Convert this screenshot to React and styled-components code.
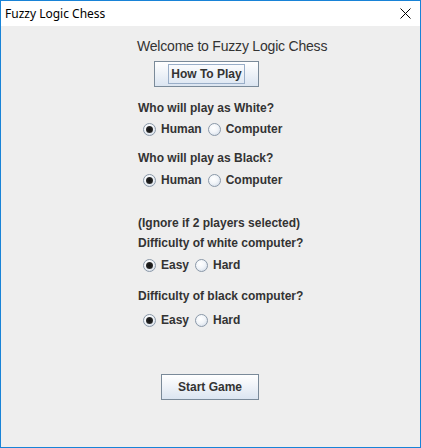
import React, { useState } from "react";
import styled, { createGlobalStyle } from "styled-components";

const GlobalStyle = createGlobalStyle`
  html, body {
    margin: 0;
    padding: 0;
    background: #ffffff;
  }
`;

const Window = styled.div`
  box-sizing: border-box;
  width: 421px;
  height: 448px;
  border: 1px solid #1883d7;
  display: flex;
  flex-direction: column;
  background: #eeeeee;
`;

const TitleBar = styled.div`
  height: 25px;
  flex: none;
  background: #ffffff;
  display: flex;
  align-items: center;
  justify-content: space-between;
  padding: 0 9px 0 4px;
  font-family: "Noto Sans", "Open Sans", sans-serif;
  font-size: 12px;
  color: #000000;
`;

const CloseIcon = () => (
  <svg width="11" height="11" viewBox="0 0 11 11">
    <path d="M0.5 0.5 L10.5 10.5 M10.5 0.5 L0.5 10.5" stroke="#000" strokeWidth="1" />
  </svg>
);

const Content = styled.div`
  flex: 1;
  display: flex;
  flex-direction: column;
  align-items: flex-start;
  padding: 12px 0 0 136px;
  font-family: "Liberation Sans", Arial, sans-serif;
  color: #333333;
`;

const Welcome = styled.div`
  font-size: 14px;
  line-height: 17px;
  letter-spacing: -0.2px;
`;

const Button = styled.button`
  box-sizing: border-box;
  height: 26px;
  width: ${(p) => p.$w}px;
  margin: ${(p) => p.$top}px 0 0 ${(p) => p.$left}px;
  border: 1px solid #7a8a99;
  border-radius: 0;
  background: linear-gradient(#ffffff 0%, #f3f6fa 35%, #dbe5f1 100%);
  font-family: "Liberation Sans", Arial, sans-serif;
  font-size: 12px;
  font-weight: bold;
  color: #333333;
  padding: 0;
  display: flex;
  align-items: center;
  justify-content: center;
`;

const Focus = styled.span`
  border: 1px solid #99aec8;
  padding: 2px 2px;
  line-height: 14px;
`;

const Label = styled.div`
  font-size: 12px;
  font-weight: bold;
  line-height: 15px;
  margin-top: ${(p) => p.$top}px;
  margin-left: 1px;
`;

const RadioRow = styled.div`
  display: flex;
  align-items: center;
  height: 20px;
  margin-top: ${(p) => p.$top}px;
  margin-left: 6px;
`;

const Option = styled.label`
  display: flex;
  align-items: center;
  gap: 5px;
  margin-right: 6px;
  font-size: 12px;
  font-weight: bold;
  cursor: default;
`;

const Dot = styled.span`
  position: relative;
  box-sizing: border-box;
  width: 13px;
  height: 13px;
  border-radius: 50%;
  border: 1px solid #8a98a8;
  background: radial-gradient(circle at 40% 35%, #ffffff 0%, #f2f5f9 45%, #cbd6e4 100%);

  &::after {
    content: "";
    display: ${(p) => (p.$on ? "block" : "none")};
    position: absolute;
    left: 2px;
    top: 2px;
    width: 7px;
    height: 7px;
    border-radius: 50%;
    background: radial-gradient(circle, #111111 0%, #222222 55%, #555555 100%);
  }
`;

function RadioGroup({ options, top }) {
  const [value, setValue] = useState(options[0]);
  return (
    <RadioRow $top={top}>
      {options.map((o) => (
        <Option key={o} onClick={() => setValue(o)}>
          <Dot $on={value === o} />
          {o}
        </Option>
      ))}
    </RadioRow>
  );
}

export default function App() {
  return (
    <>
      <GlobalStyle />
      <Window>
        <TitleBar>
          <span>Fuzzy Logic Chess</span>
          <CloseIcon />
        </TitleBar>
        <Content>
          <Welcome>Welcome to Fuzzy Logic Chess</Welcome>
          <Button $w={105} $top={6} $left={17}>
            <Focus>How To Play</Focus>
          </Button>
          <Label $top={14}>Who will play as White?</Label>
          <RadioGroup options={["Human", "Computer"]} top={3} />
          <Label $top={12}>Who will play as Black?</Label>
          <RadioGroup options={["Human", "Computer"]} top={4} />
          <Label $top={26}>(Ignore if 2 players selected)</Label>
          <Label $top={5}>Difficulty of white computer?</Label>
          <RadioGroup options={["Easy", "Hard"]} top={4} />
          <Label $top={14}>Difficulty of black computer?</Label>
          <RadioGroup options={["Easy", "Hard"]} top={6} />
          <Button $w={98} $top={44} $left={24}>
            Start Game
          </Button>
        </Content>
      </Window>
    </>
  );
}
